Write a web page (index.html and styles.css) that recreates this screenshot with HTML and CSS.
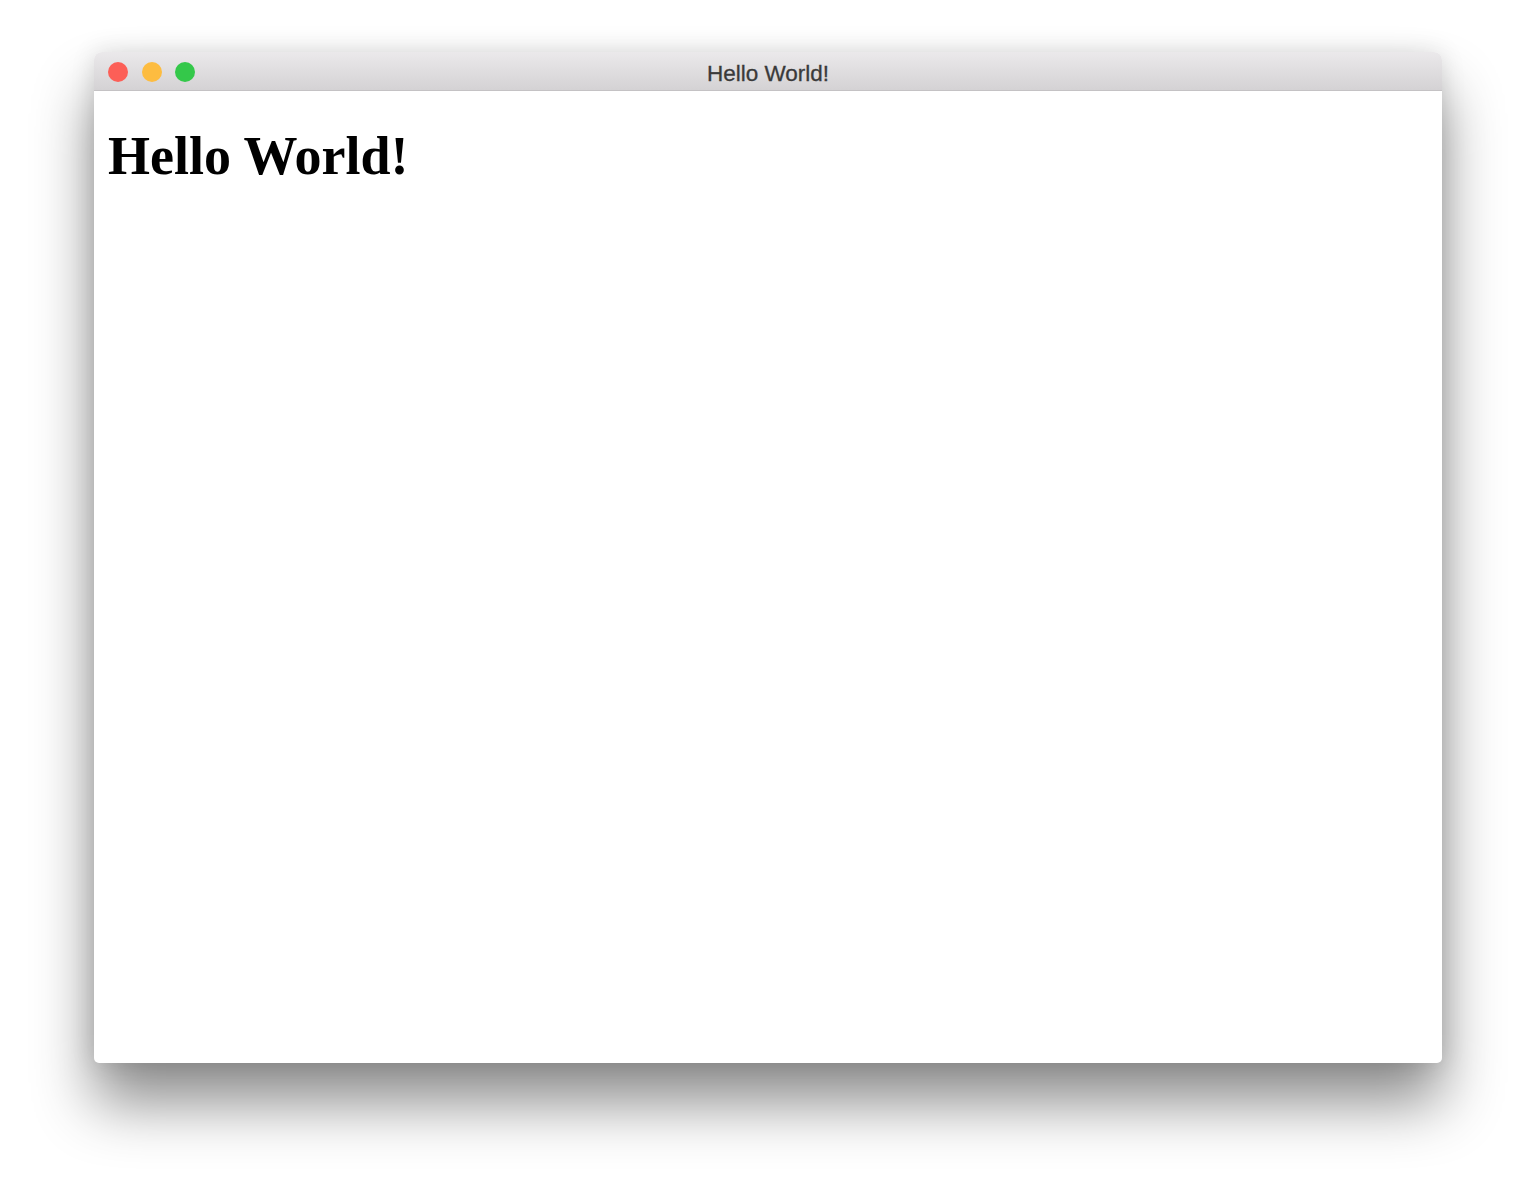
FILE: index.html
```html
<!DOCTYPE html>
<html>
<head>
<meta charset="utf-8">
<title>Hello World!</title>
<link rel="stylesheet" href="styles.css">
</head>
<body>
<div class="stage">
  <div class="window">
    <div class="titlebar">
      <div class="lights">
        <span class="light red"></span>
        <span class="light yellow"></span>
        <span class="light green"></span>
      </div>
      <div class="title">Hello World!</div>
    </div>
    <div class="content">
      <h1 class="heading">Hello World!</h1>
    </div>
  </div>
</div>
</body>
</html>
```
FILE: styles.css
```css
html, body {
  margin: 0;
  padding: 0;
  background: #ffffff;
}
.stage {
  width: 1536px;
  height: 1198px;
  box-sizing: border-box;
  padding: 52px 94px 0 94px;
  overflow: hidden;
}
.window {
  width: 1348px;
  height: 1011px;
  border-radius: 8px 8px 5px 5px;
  background: #ffffff;
  box-shadow: 0 40px 60px rgba(0,0,0,0.45), 0 0 24px rgba(0,0,0,0.12);
  display: flex;
  flex-direction: column;
  overflow: hidden;
}
.titlebar {
  position: relative;
  height: 38px;
  flex: 0 0 38px;
  background: linear-gradient(#ebe9eb, #d4d2d4);
  border-bottom: 1px solid #c4c2c4;
  display: flex;
  align-items: center;
  justify-content: center;
}
.lights {
  position: absolute;
  left: 14px;
  top: 10px;
  display: flex;
  gap: 13.5px;
}
.light {
  width: 20px;
  height: 20px;
  border-radius: 50%;
  display: block;
}
.red { background: #fc5f57; }
.yellow { background: #fdbc40; }
.green { background: #34c84a; }
.title {
  font-family: "Liberation Sans", Arial, sans-serif;
  font-size: 22.5px;
  color: #3a3a3a;
  padding-top: 5px;
  -webkit-text-stroke: 0.3px #3a3a3a;
}
.content {
  flex: 1;
  padding: 34px 14px;
}
.heading {
  margin: 0;
  font-family: "Liberation Serif", "Times New Roman", serif;
  font-weight: bold;
  font-size: 54px;
  color: #000;
}
```
